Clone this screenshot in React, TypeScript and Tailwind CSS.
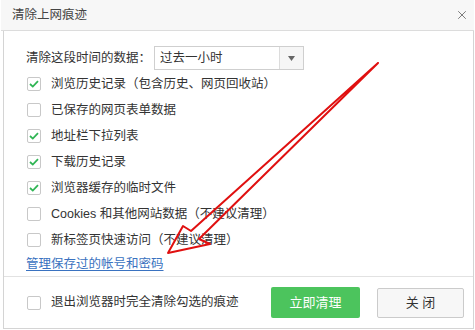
import { X } from 'lucide-react';

const FONT = '[font-family:"Liberation_Sans","Noto_Sans_CJK_SC",sans-serif]';

const rows: { label: string; checked: boolean }[] = [
  { label: '浏览历史记录（包含历史、网页回收站）', checked: true },
  { label: '已保存的网页表单数据', checked: false },
  { label: '地址栏下拉列表', checked: true },
  { label: '下载历史记录', checked: true },
  { label: '浏览器缓存的临时文件', checked: true },
  { label: 'Cookies 和其他网站数据（不建议清理）', checked: false },
  { label: '新标签页快速访问（不建议清理）', checked: false },
];

function Box({ checked }: { checked: boolean }) {
  return (
    <span className="w-[14px] h-[14px] rounded-[2px] border border-[#c8c8c8] bg-white flex items-center justify-center shrink-0">
      {checked && (
        <svg width="10" height="8" viewBox="0 0 10 8">
          <path d="M1 4 L3.8 6.6 L9 1.2" fill="none" stroke="#2fb554" strokeWidth="1.8" />
        </svg>
      )}
    </span>
  );
}

export default function App() {
  return (
    <div className={`relative w-[475px] h-[330px] bg-white text-[12.5px] text-[#333] overflow-hidden ${FONT}`}>
      <div className="h-[329px] ml-[3px] mr-[1px] border border-t-0 border-[#d4d4d4] flex flex-col">
        <header className="h-[31px] shrink-0 bg-[#f7f7f7] border-b border-[#dcdcdc] flex items-center justify-between pl-[11px] pr-[5px] -ml-[3px] -mr-[1px]">
          <span className="text-[12.5px] text-[#444]">清除上网痕迹</span>
          <X size={14} strokeWidth={1.3} className="text-[#555]" />
        </header>

        <main className="flex-1 pl-[22px] pt-[15px]">
          <div className="flex items-center h-[24px]">
            <span className="w-[128px] whitespace-nowrap">清除这段时间的数据：</span>
            <div className="w-[150px] h-[24px] border border-[#cfcfcf] flex">
              <span className="flex-1 pl-[5px] leading-[22px]">过去一小时</span>
              <span className="w-[24px] border-l border-[#dcdcdc] bg-[#f6f6f6] flex items-center justify-center">
                <svg width="7" height="5" viewBox="0 0 7 5"><path d="M0 0 H7 L3.5 5 Z" fill="#666" /></svg>
              </span>
            </div>
          </div>
          <div className="mt-[1px] flex flex-col">
            {rows.map((r) => (
              <div key={r.label} className="h-[26px] flex items-center gap-[10px] pl-[1px] whitespace-nowrap">
                <Box checked={r.checked} />
                <span>{r.label}</span>
              </div>
            ))}
          </div>
          <a className="block mt-[2px] text-[#3a72c0] underline underline-offset-2 leading-[18px]">
            管理保存过的帐号和密码
          </a>
        </main>

        <footer className="h-[52px] shrink-0 border-t border-[#e2e2e2] flex items-center pl-[23px] pr-[9px]">
          <Box checked={false} />
          <span className="ml-[10px] flex-1">退出浏览器时完全清除勾选的痕迹</span>
          <button className="w-[89px] h-[31px] rounded-[2px] bg-[#4cc45d] text-white text-[13px]">立即清理</button>
          <button className="ml-[17px] w-[87px] h-[30px] rounded-[2px] bg-[#f7f7f7] border border-[#cbcbcb] text-[#333] text-[13px]">关 闭</button>
        </footer>
      </div>

      <svg className="absolute inset-0 pointer-events-none" width="475" height="330">
        <g fill="none" stroke="#e01010" strokeWidth="2" strokeLinecap="round" strokeLinejoin="round">
          <path d="M378 63 L191 231 L183 226 L168 253 L210 244 L199 239 L378 63" />
        </g>
      </svg>
    </div>
  );
}
